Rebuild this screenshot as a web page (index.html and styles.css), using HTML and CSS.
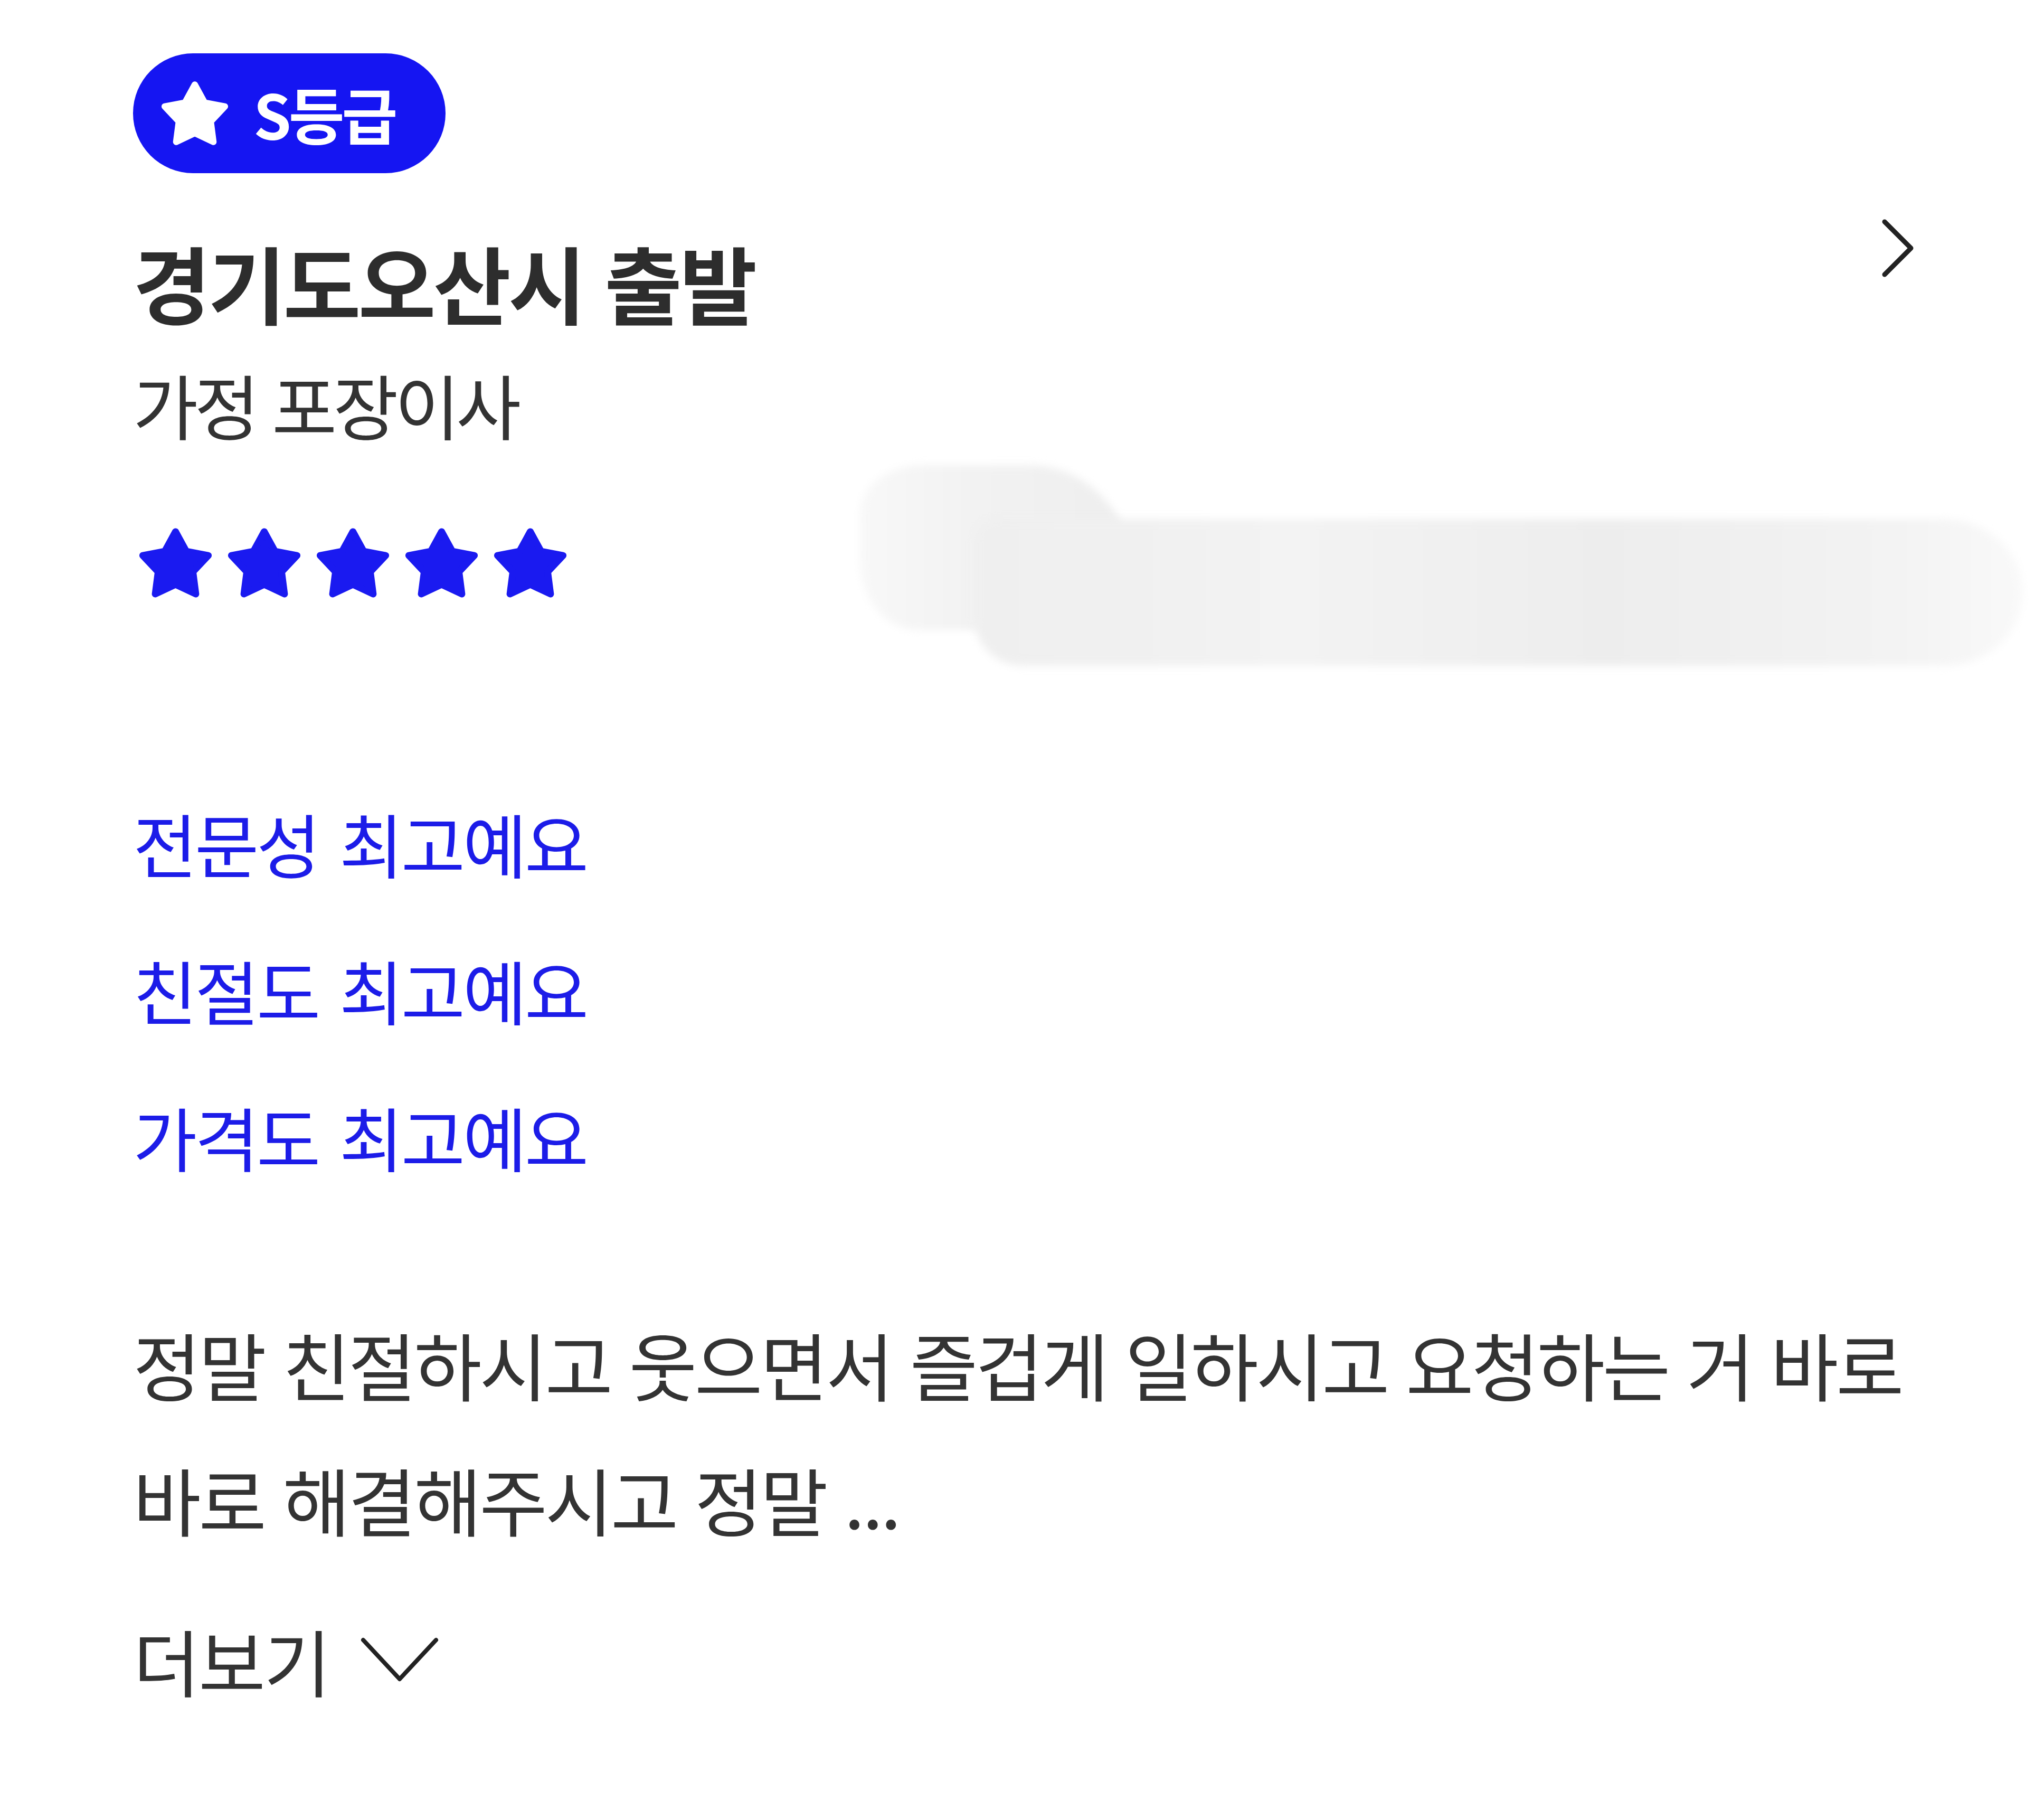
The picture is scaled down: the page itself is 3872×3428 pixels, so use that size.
FILE: index.html
```html
<!DOCTYPE html>
<html lang="ko">
<head>
  <meta charset="UTF-8" />
  <meta name="viewport" content="width=device-width, initial-scale=1.0" />
  <title>이사 후기</title>
  <link rel="stylesheet" href="styles.css">
</head>
<body>
  <div class="review-card">
    <div class="review-head">
      <div class="head-info">
        <span class="grade-badge">
          <svg viewBox="1.5 1 21 20.1" aria-hidden="true"><path class="star" d="M12 2 L15.12 7.71 L21.51 8.91 L17.04 13.64 L17.88 20.09 L12 17.3 L6.12 20.09 L6.96 13.64 L2.49 8.91 L8.88 7.71 Z"/></svg>
          S등급
        </span>
        <h2 class="route">경기도오산시 출발</h2>
        <p class="service">가정 포장이사</p>
      </div>
      <a class="detail-link" href="#" aria-label="자세히 보기">
        <svg viewBox="0 0 60 110"><polyline points="5,5 55,55 5,105"/></svg>
      </a>
    </div>

    <div class="rating-row">
      <div class="stars">
        <svg viewBox="1.5 1 21 20.1"><path class="star" d="M12 2 L15.12 7.71 L21.51 8.91 L17.04 13.64 L17.88 20.09 L12 17.3 L6.12 20.09 L6.96 13.64 L2.49 8.91 L8.88 7.71 Z"/></svg>
        <svg viewBox="1.5 1 21 20.1"><path class="star" d="M12 2 L15.12 7.71 L21.51 8.91 L17.04 13.64 L17.88 20.09 L12 17.3 L6.12 20.09 L6.96 13.64 L2.49 8.91 L8.88 7.71 Z"/></svg>
        <svg viewBox="1.5 1 21 20.1"><path class="star" d="M12 2 L15.12 7.71 L21.51 8.91 L17.04 13.64 L17.88 20.09 L12 17.3 L6.12 20.09 L6.96 13.64 L2.49 8.91 L8.88 7.71 Z"/></svg>
        <svg viewBox="1.5 1 21 20.1"><path class="star" d="M12 2 L15.12 7.71 L21.51 8.91 L17.04 13.64 L17.88 20.09 L12 17.3 L6.12 20.09 L6.96 13.64 L2.49 8.91 L8.88 7.71 Z"/></svg>
        <svg viewBox="1.5 1 21 20.1"><path class="star" d="M12 2 L15.12 7.71 L21.51 8.91 L17.04 13.64 L17.88 20.09 L12 17.3 L6.12 20.09 L6.96 13.64 L2.49 8.91 L8.88 7.71 Z"/></svg>
      </div>
      <div class="redacted"></div>
    </div>

    <ul class="tags">
      <li><span>전문성</span><span>최고예요</span></li>
      <li><span>친절도</span><span>최고예요</span></li>
      <li><span>가격도</span><span>최고예요</span></li>
    </ul>

    <p class="review-text">정말 친절하시고 웃으면서 즐겁게 일하시고 요청하는 거 바로 바로 해결해주시고 정말 ...</p>

    <button class="more-btn">
      더보기
      <svg viewBox="0 0 150 86"><polyline points="6,6 75,80 144,6"/></svg>
    </button>
  </div>
</body>
</html>
```

FILE: styles.css
```css
* {
  margin: 0;
  padding: 0;
  box-sizing: border-box;
}

body {
  font-family: "Noto Sans CJK KR", "Noto Sans", sans-serif;
  background: #fff;
  color: #333;
  word-break: keep-all;
}

.review-card {
  padding: 101px 247px 120px 252px;
}

.review-head {
  display: flex;
  justify-content: space-between;
  align-items: flex-start;
}

.head-info {
  display: flex;
  flex-direction: column;
  align-items: flex-start;
}

.grade-badge {
  display: inline-flex;
  align-items: center;
  gap: 48px;
  height: 227px;
  padding: 0 96px 0 54px;
  border-radius: 114px;
  background: #1515f2;
  color: #fff;
  font-size: 115px;
  font-weight: 700;
  line-height: 1;
  letter-spacing: -5px;
}

.grade-badge svg {
  width: 126px;
  height: 121px;
}

.grade-badge .star {
  fill: #fff;
  stroke: #fff;
  stroke-width: 2;
  stroke-linejoin: round;
}

.route {
  margin-top: 103px;
  font-size: 160px;
  font-weight: 700;
  line-height: 205px;
  letter-spacing: -5px;
  color: #2d2d2d;
}

.service {
  margin-top: 42px;
  font-size: 134px;
  line-height: 174px;
  letter-spacing: -7px;
  color: #333;
}

.detail-link {
  display: block;
  width: 60px;
  height: 110px;
  margin-top: 314px;
}

.detail-link svg,
.more-btn svg {
  display: block;
  width: 100%;
  height: 100%;
  fill: none;
  stroke: #222;
  stroke-linecap: round;
  stroke-linejoin: round;
}

.detail-link svg {
  stroke-width: 9;
}

.rating-row {
  display: flex;
  align-items: center;
  height: 380px;
  margin-top: 29px;
}

.stars {
  display: flex;
  gap: 31px;
  margin-left: 12px;
  margin-bottom: 10px;
}

.stars svg {
  width: 137px;
  height: 132px;
}

.stars .star {
  fill: #1a1af0;
  stroke: #1a1af0;
  stroke-width: 2;
  stroke-linejoin: round;
}

/* 가려진 영역 (블러 처리) */
.redacted {
  position: relative;
  width: 2203px;
  height: 380px;
  margin-left: auto;
  margin-right: -207px;
}

.redacted::before,
.redacted::after {
  content: "";
  position: absolute;
  filter: blur(8px);
}

.redacted::before {
  left: 0;
  top: 0;
  width: 522px;
  height: 312px;
  border-radius: 120px 200px 0 110px / 90px 220px 0 130px;
  background: linear-gradient(to right, #f8f8f8, #f2f2f2 40%, #eeeeee);
}

.redacted::after {
  left: 217px;
  top: 102px;
  width: 1986px;
  height: 278px;
  border-radius: 40px 150px 150px 90px / 40px 139px 139px 90px;
  background: linear-gradient(to right, #efefef, #f0f0f0 15%, #f3f3f3 30%, #f0f0f0 45%, #ededed 60%, #f0f0f0 75%, #f3f3f3 88%, #f9f9f9);
}

.tags {
  list-style: none;
  display: flex;
  flex-direction: column;
  gap: 80px;
  margin-top: 236px;
}

.tags li {
  display: flex;
  gap: 40px;
  font-size: 132px;
  line-height: 198px;
  letter-spacing: -4.5px;
  color: #1c1ce8;
}

.review-text {
  margin: 203px -150px 0 0;
  font-size: 140px;
  line-height: 256px;
  letter-spacing: -4.5px;
  color: #333;
}

.more-btn {
  display: flex;
  align-items: center;
  gap: 58px;
  margin-top: 87px;
  border: none;
  background: none;
  font-family: inherit;
  font-size: 138px;
  line-height: 180px;
  letter-spacing: -3px;
  color: #333;
  cursor: pointer;
}

.more-btn svg {
  width: 150px;
  height: 86px;
  stroke-width: 8;
}
```
